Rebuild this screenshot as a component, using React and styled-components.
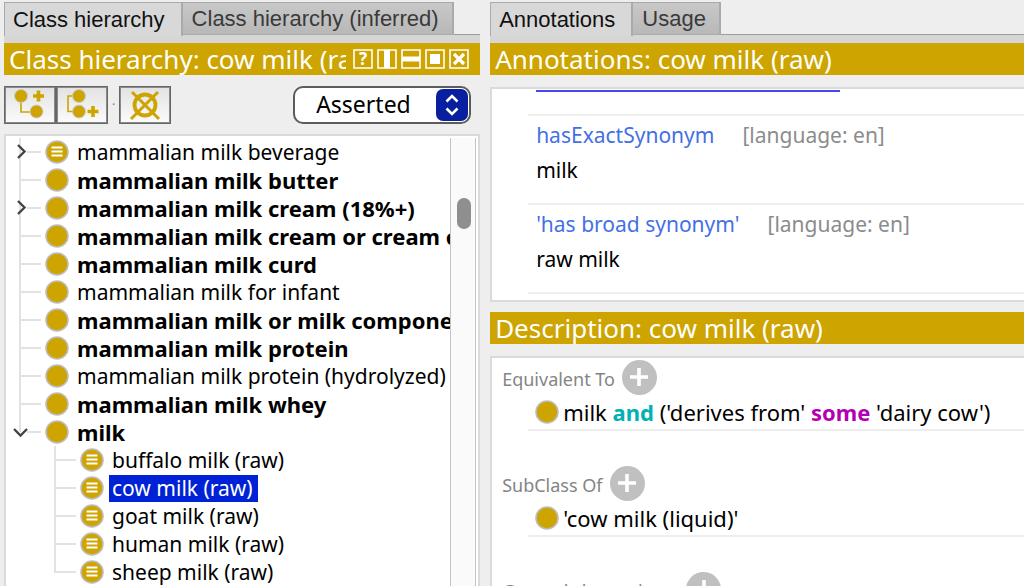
import { styled, createGlobalStyle } from "styled-components";

const gold = "#cda400";

const GlobalStyle = createGlobalStyle`
  * {
    box-sizing: border-box;
  }
  body {
    margin: 0;
    background: #eeeeee;
    color: #000;
    font-family: "Noto Sans", "Open Sans", sans-serif;
    font-size: 21px;
  }
  button, select {
    font: inherit;
    color: inherit;
  }
  ul, h2, p, dl, dd, dt {
    margin: 0;
    padding: 0;
    font-weight: normal;
  }
  ul {
    list-style: none;
  }
`;

const Page = styled.main`
  display: grid;
  grid-template-columns: minmax(0, 33fr) minmax(0, 37fr);
  column-gap: 10px;
  height: 100vh;
  padding: 2px 0 0 4px;
  overflow: hidden;
`;

const Column = styled.section`
  display: flex;
  flex-direction: column;
  min-height: 0;
`;

const Tabs = styled.div`
  display: flex;
  height: 41px;
  border-bottom: 8px solid #d6d6d6;
  background: linear-gradient(#9c9c9c, #9c9c9c) bottom / 100% 1px no-repeat;
`;

const Tab = styled.button`
  height: ${(p) => (p.$active ? "34px" : "33px")};
  padding: ${(p) => (p.$active ? "0 16px 0 8px" : "0 13px 0 9px")};
  border: 1px solid #aaaaaa;
  border-width: ${(p) => (p.$active ? "1px 2px 0 1px" : "1px 2px 1px 0")};
  background: ${(p) => (p.$active ? "#d8d8d8" : "linear-gradient(#c8c8c8, #b8b8b8)")};
  color: ${(p) => (p.$active ? "#111" : "#3a3a3a")};
  font-family: "Liberation Sans", Arial, sans-serif;
  font-size: 22px;
  line-height: 30px;
  white-space: nowrap;
`;

const TitleBar = styled.header`
  display: flex;
  flex: none;
  align-items: center;
  gap: 7px;
  height: 32px;
  padding: 0 11px 0 5px;
  background: ${gold};
  color: #fff;
`;

const Title = styled.h2`
  flex: 1;
  overflow: hidden;
  font-size: 26px;
  line-height: 32px;
  white-space: nowrap;
`;

const TitleActions = styled.div`
  display: flex;
  gap: 4px;
`;

const IconButton = styled.button`
  display: flex;
  padding: 0;
  border: 0;
  background: none;
`;

const Toolbar = styled.div`
  display: flex;
  flex: none;
  align-items: center;
  height: 59px;
  padding-right: 9px;
`;

const ToolButton = styled.button`
  display: flex;
  align-items: center;
  justify-content: center;
  width: 52px;
  height: 38px;
  padding: 0;
  border: 1px solid #666;
  outline: 1px solid #8a8a8a;
  outline-offset: -2px;
  background: linear-gradient(#e2e2e2, #fbfbfb);
`;

const Separator = styled.span`
  width: 11px;
  text-align: center;
  font-size: 12px;
  color: #777;
`;

const SelectBox = styled.label`
  display: grid;
  align-items: center;
  margin-left: auto;

  select,
  svg {
    grid-area: 1 / 1;
  }
  svg {
    justify-self: end;
    margin-right: 3px;
    pointer-events: none;
  }
`;

const Select = styled.select`
  width: 178px;
  height: 38px;
  padding: 0 50px 4px 21px;
  border: 2px solid #5c5c5c;
  border-radius: 10px;
  background: #fff;
  font-size: 23px;
  appearance: none;
`;

const TreePanel = styled.div`
  display: flex;
  flex: 1;
  min-height: 0;
  padding: 2px 2px 0 0;
  border: 2px solid #dadada;
  border-bottom: 0;
  background: #fff;
`;

const TreeView = styled.div`
  flex: 1;
  padding-left: 13px;
  overflow: hidden;
`;

const Children = styled.ul`
  padding-left: 35px;
`;

const Row = styled.div`
  display: flex;
  align-items: center;
  height: 28px;
`;

const Branch = styled.span`
  position: relative;
  flex: none;
  width: 22px;
  height: 28px;
  margin-right: 4px;
  background:
    linear-gradient(#e2e2e2, #e2e2e2) left top / 2px ${(p) => (p.$last ? "14px" : "100%")} no-repeat,
    linear-gradient(#e2e2e2, #e2e2e2) right center / ${(p) => (p.$toggle ? "14px" : "100%")} 2px no-repeat;
`;

const Toggle = styled.button`
  position: absolute;
  top: 6px;
  left: -6px;
  display: flex;
  padding: 0;
  border: 0;
  background: none;
`;

const Label = styled.span`
  margin-left: 5px;
  padding: 0 5px 0 3px;
  background: ${(p) => (p.$selected ? "#0022d6" : "none")};
  color: ${(p) => (p.$selected ? "#fff" : "#000")};
  font-size: ${(p) => (p.$bold ? "22px" : "21px")};
  font-weight: ${(p) => (p.$bold ? 700 : 400)};
  line-height: 27px;
  white-space: nowrap;
`;

const ScrollTrack = styled.div`
  flex: none;
  width: 26px;
  padding: 60px 4px 0 6px;
  border: solid #c4c4c4;
  border-width: 0 1px;
  background: #fafafa;
`;

const ScrollThumb = styled.div`
  height: 31px;
  border-radius: 7px;
  background: #8f8f8f;
`;

const Panel = styled.div`
  flex: ${(p) => (p.$grow ? 1 : "none")};
  min-height: 0;
  margin: ${(p) => (p.$grow ? "12px 0 0" : "12px 0 10px")};
  border: solid #dadada;
  border-width: ${(p) => (p.$grow ? "2px 0 0 2px" : "2px 0 2px 2px")};
  background: #fff;
  overflow: hidden;
`;

const LinkEnd = styled.div`
  height: 25px;
  padding: 1px 0 0 44px;

  &::before {
    content: "";
    display: block;
    width: 304px;
    height: 2px;
    background: #4646ea;
  }
`;

const Annotation = styled.div`
  height: 89px;
  margin-left: 36px;
  padding: 2px 0 0 8px;
  border-top: 2px solid #eeeeee;
  line-height: 35px;
`;

const AnnotationHead = styled.dt`
  display: flex;
  gap: 28px;
  color: #4470e6;
`;

const Lang = styled.span`
  color: #8c8c8c;
`;

const PanelEnd = styled.div`
  height: 8px;
  margin-left: 36px;
  border-top: 2px solid #eeeeee;
`;

const Axioms = styled.div`
  height: 106px;
  padding-top: 1px;
`;

const AxiomHead = styled.div`
  display: flex;
  align-items: center;
  gap: 7px;
  height: 36px;
  padding-left: 10px;
  color: #858585;
  font-size: 18px;
  white-space: nowrap;
`;

const AxiomName = styled.span`
  padding-top: 4px;
`;

const AddButton = styled.button`
  display: flex;
  align-items: center;
  justify-content: center;
  width: 35px;
  height: 35px;
  padding: 0;
  border: 0;
  border-radius: 50%;
  background: #c0c0c0;
`;

const Axiom = styled.div`
  display: flex;
  align-items: center;
  gap: 4px;
  height: 36px;
  margin-left: 36px;
  padding-left: 7px;
  border-bottom: 2px solid #eeeeee;
  font-size: 22px;
  line-height: 32px;
  white-space: nowrap;
`;

const Keyword = styled.b`
  color: ${(p) => p.$color};
`;

const DotIcon = styled.svg`
  flex: none;
`;

function Dot({ defined }) {
  return (
    <DotIcon width="24" height="24" viewBox="0 0 24 24">
      <circle cx="12" cy="12" r="11" fill={gold} stroke="#bdbdbd" strokeWidth="1.6" />
      {defined && <path d="M6.5 7.5h11M6.5 11.5h11M6.5 15.5h11" stroke="#fff" strokeWidth="1.8" />}
    </DotIcon>
  );
}

function Chevron({ open }) {
  return (
    <svg width="16" height="16" fill="none" stroke="#444" strokeWidth="2.4">
      <path d={open ? "M1 5l6.500 6.500L14 5" : "M5 1l6.500 6.500L5 14"} />
    </svg>
  );
}

const titleIcons = [
  ["Help", <text key="t" x="10" y="16" textAnchor="middle" fontSize="17" fontWeight="700" fill="#fff">?</text>],
  ["Split vertically", <path key="v" d="M7 1h6v18H7z" fill="#fff" />],
  ["Split horizontally", <path key="h" d="M1 7.500h18v5H1z" fill="#fff" />],
  ["Float", <path key="f" d="M5 5h10v10H5z" fill="#fff" />],
  ["Close", <path key="c" d="M5 5l10 10M15 5L5 15" stroke="#fff" strokeWidth="3.200" />],
];

const tree = [
  { name: "mammalian milk beverage", defined: true, toggle: true },
  { name: "mammalian milk butter", bold: true },
  { name: "mammalian milk cream (18%+)", bold: true, toggle: true },
  { name: "mammalian milk cream or cream c", bold: true },
  { name: "mammalian milk curd", bold: true },
  { name: "mammalian milk for infant" },
  { name: "mammalian milk or milk compone", bold: true },
  { name: "mammalian milk protein", bold: true },
  { name: "mammalian milk protein (hydrolyzed)" },
  { name: "mammalian milk whey", bold: true },
  {
    name: "milk",
    bold: true,
    toggle: true,
    children: [
      { name: "buffalo milk (raw)", defined: true },
      { name: "cow milk (raw)", defined: true, selected: true },
      { name: "goat milk (raw)", defined: true },
      { name: "human milk (raw)", defined: true },
      { name: "sheep milk (raw)", defined: true },
    ],
  },
];

function TreeNode({ node, last }) {
  return (
    <li>
      <Row>
        <Branch $last={last} $toggle={node.toggle}>
          {node.toggle && (
            <Toggle aria-label={node.children ? "Collapse" : "Expand"}>
              <Chevron open={!!node.children} />
            </Toggle>
          )}
        </Branch>
        <Dot defined={node.defined} />
        <Label $bold={node.bold} $selected={node.selected}>{node.name}</Label>
      </Row>
      {node.children && (
        <Children>
          {node.children.map((child, i) => (
            <TreeNode key={child.name} node={child} last={i === node.children.length - 1} />
          ))}
        </Children>
      )}
    </li>
  );
}

function AxiomTitle({ children }) {
  return (
    <AxiomHead>
      <AxiomName>{children}</AxiomName>
      <AddButton aria-label="Add">
        <svg width="18" height="18" stroke="#fff" strokeWidth="3.600">
          <path d="M9 0v18M0 9h18" />
        </svg>
      </AddButton>
    </AxiomHead>
  );
}

export default function App() {
  return (
    <>
      <GlobalStyle />
      <Page>
        <Column>
          <Tabs>
            <Tab $active>Class hierarchy</Tab>
            <Tab>Class hierarchy (inferred)</Tab>
          </Tabs>
          <TitleBar>
            <Title>Class hierarchy: cow milk (raw)</Title>
            <TitleActions>
              {titleIcons.map(([name, shape]) => (
                <IconButton key={name} aria-label={name}>
                  <svg width="20" height="20" viewBox="0 0 20 20">
                    <path d="M1 1h18v18H1z" fill="none" stroke="#fff" strokeWidth="1.600" />
                    {shape}
                  </svg>
                </IconButton>
              ))}
            </TitleActions>
          </TitleBar>
          <Toolbar>
            <ToolButton aria-label="Add subclass">
              <svg width="50" height="36" viewBox="0 0 50 36" fill={gold}>
                <path d="M16 14v11h12" fill="none" stroke={gold} strokeWidth="1.600" />
                <circle cx="16" cy="9" r="6.500" stroke="#ccc" />
                <circle cx="31.500" cy="24.500" r="6.500" stroke="#ccc" />
                <path d="M33.500 3.500v11M28 9h11" stroke={gold} strokeWidth="3.600" />
              </svg>
            </ToolButton>
            <ToolButton aria-label="Add sibling class">
              <svg width="50" height="36" viewBox="0 0 50 36" fill={gold}>
                <path d="M17 9h-6v15.500h6" fill="none" stroke={gold} strokeWidth="1.600" />
                <circle cx="22" cy="9" r="6.500" stroke="#ccc" />
                <circle cx="22" cy="24.500" r="6.500" stroke="#ccc" />
                <path d="M36 19v11M30.500 24.500h11" stroke={gold} strokeWidth="3.600" />
              </svg>
            </ToolButton>
            <Separator>·</Separator>
            <ToolButton aria-label="Delete class">
              <svg width="50" height="36" viewBox="0 0 50 36" fill="none" stroke={gold}>
                <circle cx="25" cy="18" r="10.500" strokeWidth="3.800" />
                <path d="M12 5l27 27M38 5L11 32" strokeWidth="3" />
              </svg>
            </ToolButton>
            <SelectBox>
              <Select aria-label="Hierarchy mode" defaultValue="Asserted">
                <option>Asserted</option>
              </Select>
              <svg width="32" height="32" viewBox="0 0 32 32" fill="none" stroke="#fff" strokeWidth="2.600">
                <rect width="32" height="32" rx="7" fill="#0820a0" stroke="none" />
                <path d="M10.500 12.500L16 7l5.500 5.500M10.500 19.500L16 25l5.500-5.500" />
              </svg>
            </SelectBox>
          </Toolbar>
          <TreePanel>
            <TreeView>
              <ul>
                {tree.map((node, i) => (
                  <TreeNode key={node.name} node={node} last={i === tree.length - 1} />
                ))}
              </ul>
            </TreeView>
            <ScrollTrack>
              <ScrollThumb />
            </ScrollTrack>
          </TreePanel>
        </Column>

        <Column>
          <Tabs>
            <Tab $active>Annotations</Tab>
            <Tab>Usage</Tab>
          </Tabs>
          <TitleBar>
            <Title>Annotations: cow milk (raw)</Title>
          </TitleBar>
          <Panel>
            <LinkEnd />
            <dl>
              <Annotation>
                <AnnotationHead>
                  hasExactSynonym <Lang>[language: en]</Lang>
                </AnnotationHead>
                <dd>milk</dd>
              </Annotation>
              <Annotation>
                <AnnotationHead>
                  'has broad synonym' <Lang>[language: en]</Lang>
                </AnnotationHead>
                <dd>raw milk</dd>
              </Annotation>
            </dl>
            <PanelEnd />
          </Panel>
          <TitleBar>
            <Title>Description: cow milk (raw)</Title>
          </TitleBar>
          <Panel $grow>
            <Axioms>
              <AxiomTitle>Equivalent To</AxiomTitle>
              <Axiom>
                <Dot />
                <span>
                  milk <Keyword $color="#00b2b2">and</Keyword> ('derives from'{" "}
                  <Keyword $color="#b200b2">some</Keyword> 'dairy cow')
                </span>
              </Axiom>
            </Axioms>
            <Axioms>
              <AxiomTitle>SubClass Of</AxiomTitle>
              <Axiom>
                <Dot />
                <span>'cow milk (liquid)'</span>
              </Axiom>
            </Axioms>
            <Axioms>
              <AxiomTitle>General class axioms</AxiomTitle>
            </Axioms>
          </Panel>
        </Column>
      </Page>
    </>
  );
}
